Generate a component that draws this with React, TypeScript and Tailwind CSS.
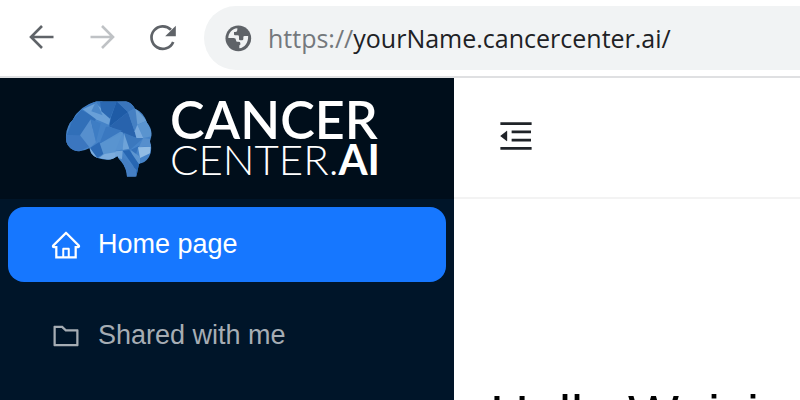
import { AiOutlineFolder, AiOutlineHome, AiOutlineMenuFold } from 'react-icons/ai';
import clsx from 'clsx';
import type { FC } from 'react';

interface NavItem {
    href: string;
    label: string;
    icon: FC<{ size?: number }>;
    active?: boolean;
}

const NAV_ITEMS: NavItem[] = [
    { href: '#home', label: 'Home page', icon: AiOutlineHome, active: true },
    { href: '#shared', label: 'Shared with me', icon: AiOutlineFolder },
];

const BackIcon = () => (
    <svg viewBox="0 0 36 36" className="h-9 w-9" fill="none" stroke="currentColor" strokeWidth="2.6" aria-hidden="true">
        <path d="M29.500 17H7.500M18 6 7 17l11 11" />
    </svg>
);

const ReloadIcon = () => (
    <svg viewBox="0 0 36 36" className="h-9 w-9" aria-hidden="true">
        <path
            d="M29.200 22A11.300 11.300 0 1 1 27 9.800"
            fill="none"
            stroke="currentColor"
            strokeWidth="2.700"
        />
        <path d="M31.800 5.700v10.600H21.200z" fill="currentColor" />
    </svg>
);

const GlobeIcon = () => (
    <svg viewBox="0 0 108 108" className="h-9 w-9 shrink-0" aria-hidden="true">
        <circle cx="55" cy="55" r="38.500" fill="#5f6368" />
        <path
            d="M25 54C25 39 36 26 52 24.500V30q0 6-6 6h-4v7q0 3 3 3h8q4 0 4 4v8q0 3 4 3h5q4 0 4-4v-6q0-3 4-3h10.500C85 68 74 83 58 85V77q0-3 3-3v-5q0-4-6-4h-4q-3 0-3-4 0-7-7-7z"
            fill="#f1f3f4"
        />
    </svg>
);

const BrainLogo = () => (
    <svg viewBox="0 0 294 258" className="h-[86px] w-[98px] shrink-0" aria-hidden="true">
        <defs>
            <clipPath id="brain">
                <path d="M110 16h88q17 4 27 22 26 10 36 42 18 20 12 46-6 8 0 22 3 20-6 35-12 19-30 20l-8 39h-28q-1-26-17-45-8-6-12-17-14 14-44 10-34-4-40-33-26 14-48 5Q15 150 18 118q2-30 20-46Q58 30 110 16z" />
            </clipPath>
        </defs>
        <g clipPath="url(#brain)">
            <path d="M0 0h294v258H0z" fill="#4583c8" />
            <path d="M110 10 64 42 20 80l26 20 62-34 20-50z" fill="#3d7cc3" />
            <path d="M64 42 108 66 92 122 20 118l18-46z" fill="#316fb8" />
            <path d="M18 118h42l30 32-40 20-36-16z" fill="#3b76bf" />
            <path d="M60 118 92 70 108 138 90 156z" fill="#568fce" />
            <path d="M92 70 122 82 108 138z" fill="#3e7dc4" />
            <path d="M68 40 108 22 152 66 146 86 108 70z" fill="#69a0d8" />
            <path d="m108 16 20 42-34-12z" fill="#4a87c9" />
            <path d="M120 16h50l-20 52-26-22z" fill="#2a68b2" />
            <path d="m170 16 34 32-56 44 4-26z" fill="#1e5ba6" />
            <path d="m170 16 34 32 22-12-20-22z" fill="#3a75bb" />
            <path d="m204 48 26 78-42-14-40-20z" fill="#2863ad" />
            <path d="m204 48 22-12 12 28-14 42z" fill="#4580c3" />
            <path d="m226 36 34 38-28 12z" fill="#6a9fd4" />
            <path d="m232 86 28-12 20 46-30 6z" fill="#5a94cf" />
            <path d="m224 106 8-20 18 40-20 4z" fill="#79aadd" />
            <path d="m148 92 42 18 2 50-36 6-38-22 20-34z" fill="#5691cf" />
            <path d="m138 92-20 52 68-40-38-12z" fill="#3a78c0" />
            <path d="m118 144 70-34-24 60-38 12z" fill="#5994d0" />
            <path d="m90 156 28-18 12 36-20 12z" fill="#2c6ab5" />
            <path d="m90 156 22 30-20-4zM116 186l18-12 36-6-6 28z" fill="#7cacdd" />
            <path d="m192 110 38 16 20 0-38 34-20 2z" fill="#3b78be" />
            <path d="m192 112 16 46-20 4z" fill="#6ea3d8" />
            <path d="m212 162 60-30-38 22-10 34z" fill="#3472bb" />
            <path d="m250 126 26 4-4 20-36 4z" fill="#568fcd" />
            <path d="m234 154 38-2-2 20-30 14z" fill="#91bce4" />
            <path d="m212 162 28 20 0 24-20-16z" fill="#5d96d1" />
            <path d="m188 164 20-2 30 44-4 40-14-36z" fill="#2766b2" />
            <path d="m186 180 44 42-4 24h-28z" fill="#457fc4" />
            <path d="m166 166 22-2-2 26-20-8z" fill="#73a6da" />
        </g>
    </svg>
);

const BrowserBar = () => (
    <header className="flex h-[78px] shrink-0 items-center border-b-2 border-[#dfe0e2] bg-white pl-6 text-[#5f6368]">
        <div className="flex gap-6">
            <button aria-label="Back">
                <BackIcon />
            </button>
            <button aria-label="Forward" className="-scale-x-100 text-[#bfc2c5]">
                <BackIcon />
            </button>
            <button aria-label="Reload">
                <ReloadIcon />
            </button>
        </div>
        <div className="ml-6 flex h-16 flex-1 items-center gap-3 rounded-l-full bg-[#f1f3f4] pl-4">
            <GlobeIcon />
            <div
                role="textbox"
                aria-label="Address"
                className="font-['Open_Sans','Noto_Sans',sans-serif] text-[25px] leading-8 whitespace-nowrap text-[#202124]"
            >
                <span className="text-[#74787c]">https://</span>yourName.cancercenter.ai/
            </div>
        </div>
    </header>
);

const Sidebar = () => (
    <aside className="w-[454px] shrink-0 bg-[#001529]">
        <a href="#home" className="flex h-[121px] items-center gap-3 bg-[#000e1b] pl-[60px] text-white">
            <BrainLogo />
            <div className="font-['Lato',sans-serif]">
                <div className="text-[52px] leading-10 font-semibold">CANCER</div>
                <div className="text-[42px] leading-10 font-light">
                    CENTER.<span className="font-bold">AI</span>
                </div>
            </div>
        </a>
        <nav className="flex flex-col gap-4 p-2">
            {NAV_ITEMS.map(({ href, label, icon: Icon, active }) => (
                <a
                    key={href}
                    href={href}
                    className={clsx(
                        'flex h-[75px] items-center gap-4 rounded-2xl pl-[42px] text-[27px]',
                        active ? 'bg-[#1677ff] text-white' : 'text-[#a6adb4]',
                    )}
                >
                    <Icon size={32} />
                    {label}
                </a>
            ))}
        </nav>
    </aside>
);

export default function App() {
    return (
        <div className="flex h-screen flex-col overflow-hidden bg-white font-['Liberation_Sans',Arial,sans-serif]">
            <BrowserBar />
            <div className="flex min-h-0 flex-1">
                <Sidebar />
                <div className="flex-1">
                    <div className="flex h-[121px] items-center border-b-2 border-[#f3f3f3] pb-1 pl-[42px] text-[#1f2328]">
                        <button aria-label="Collapse menu">
                            <AiOutlineMenuFold size={40} />
                        </button>
                    </div>
                    <main className="pt-[187px] pl-9">
                        <h1 className="text-[54px] leading-[56px] whitespace-nowrap text-black">Hello Wojciech</h1>
                    </main>
                </div>
            </div>
        </div>
    );
}
